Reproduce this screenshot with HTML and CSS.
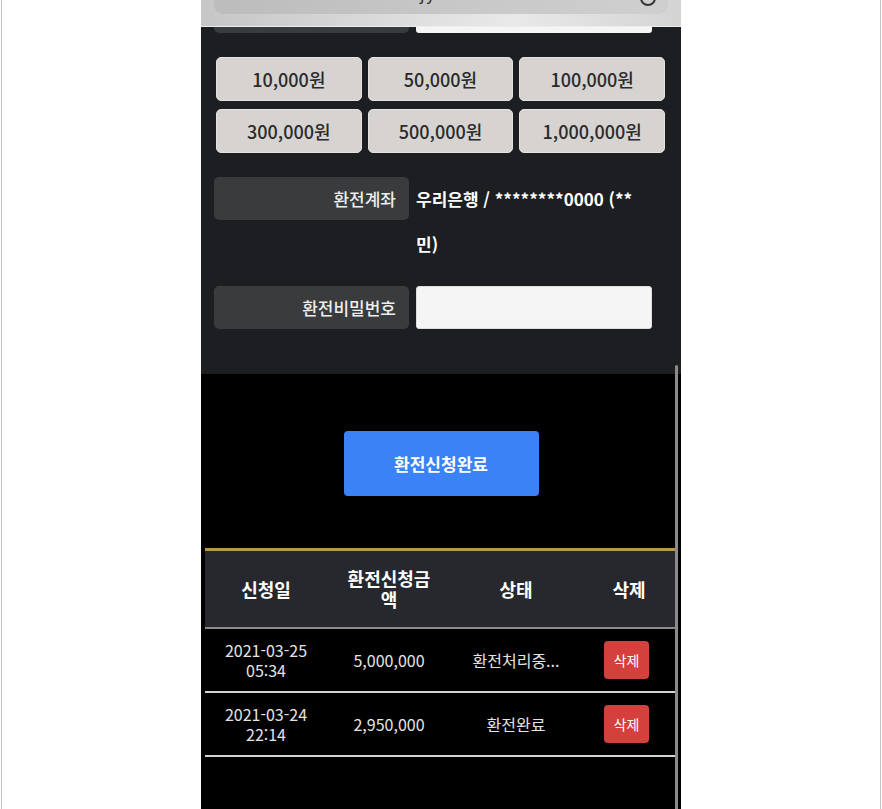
FILE: index.html
```html
<!DOCTYPE html>
<html lang="ko">
<head>
  <meta charset="UTF-8">
  <meta name="viewport" content="width=device-width, initial-scale=1.0">
  <title>환전신청</title>
<link rel="stylesheet" href="styles.css">
</head>
<body>
  <div class="frame">
    <div class="phone">
      <div class="browser-bar">
        <div class="url-pill">
          <div class="url-text"><span class="blk"></span><span class="blk"></span><span class="blk"></span> .jy.com</div>
          <span class="reload"></span>
        </div>
      </div>

      <section class="form-area">
        <div class="prev-row">
          <span class="stub-label"></span>
          <span class="stub-input"></span>
        </div>

        <div class="amounts">
          <button type="button" class="amount">10,000원</button>
          <button type="button" class="amount">50,000원</button>
          <button type="button" class="amount">100,000원</button>
          <button type="button" class="amount">300,000원</button>
          <button type="button" class="amount">500,000원</button>
          <button type="button" class="amount">1,000,000원</button>
        </div>

        <div class="row">
          <div class="label">환전계좌</div>
          <div class="value">우리은행 / ********0000 (**<br>민)</div>
        </div>

        <div class="row row-pw">
          <div class="label">환전비밀번호</div>
          <input type="password" class="pw">
        </div>
      </section>

      <section class="bottom">
        <div class="submit-wrap">
          <button type="button" class="submit">환전신청완료</button>
        </div>

        <table class="history">
          <colgroup>
            <col style="width:122px">
            <col style="width:124px">
            <col style="width:130px">
            <col style="width:96px">
          </colgroup>
          <thead>
            <tr>
              <th>신청일</th>
              <th>환전신청금액</th>
              <th>상태</th>
              <th>삭제</th>
            </tr>
          </thead>
          <tbody>
            <tr>
              <td>2021-03-25<br>05:34</td>
              <td>5,000,000</td>
              <td>환전처리중...</td>
              <td class="del-cell"><button type="button" class="del">삭제</button></td>
            </tr>
            <tr>
              <td>2021-03-24<br>22:14</td>
              <td>2,950,000</td>
              <td>환전완료</td>
              <td class="del-cell"><button type="button" class="del">삭제</button></td>
            </tr>
          </tbody>
        </table>

        <div class="scrollbar"></div>
      </section>
    </div>
  </div>
</body>
</html>
```

FILE: styles.css
```css
body {
  margin: 0;
  padding: 0;
  background-color: #fff;
  font-family: "Noto Sans CJK KR", "Noto Sans", sans-serif;
}

.frame {
  margin: 0 1px;
  border-left: 1px solid #c4c4c4;
  border-right: 1px solid #c4c4c4;
  min-height: 809px;
}

.phone {
  position: relative;
  width: 480px;
  margin: 0 auto;
  min-height: 809px;
  display: flex;
  flex-direction: column;
  background-color: #000;
}

/* browser chrome at the top */
.browser-bar {
  height: 26px;
  padding: 0 13px;
  background: linear-gradient(to right, #c6c6c6, #e9e9e9 65%, #d4d4d4);
  border-bottom: 1px solid #ededed;
}

.url-pill {
  height: 14px;
  overflow: hidden;
  display: flex;
  justify-content: space-between;
  border-radius: 0 0 9px 9px;
  background: linear-gradient(to right, #bcbcbc, #c9c9c9 60%, #cfcfcf);
}

.url-text {
  margin-top: -15px;
  padding-left: 130px;
  font-size: 16px;
  line-height: 16px;
  color: #2a2a2a;
  letter-spacing: 2px;
}

.blk {
  display: inline-block;
  width: 13px;
  height: 15px;
  margin-right: 8px;
  background-color: #666;
}

.reload {
  width: 12px;
  height: 12px;
  margin-top: -10px;
  margin-right: 12px;
  border: 2px solid #333;
  border-radius: 50%;
}

/* form section */
.form-area {
  background-color: #1c1e22;
  padding-bottom: 45px;
}

.prev-row {
  display: flex;
  gap: 7px;
  padding-left: 13px;
  height: 6px;
}

.stub-label {
  width: 195px;
  background-color: #3a3b3d;
  border-radius: 0 0 5px 5px;
}

.stub-input {
  width: 236px;
  background-color: #f5f5f5;
  border-radius: 0 0 3px 3px;
}

.amounts {
  display: grid;
  grid-template-columns: repeat(3, 1fr);
  column-gap: 6px;
  row-gap: 8px;
  margin-top: 24px;
  padding: 0 16px 0 15px;
}

.amount {
  height: 44px;
  border: 1px solid #e4e2e0;
  border-radius: 5px;
  background-color: #d6d3d1;
  color: #2a2a2a;
  font-family: inherit;
  font-size: 18px;
  font-weight: 500;
  cursor: pointer;
}

.row {
  display: flex;
  gap: 7px;
  padding-left: 13px;
  margin-top: 24px;
}

.row-pw {
  margin-top: 20px;
}

.label {
  width: 195px;
  height: 43px;
  box-sizing: border-box;
  padding-right: 13px;
  border-radius: 5px;
  background-color: #3a3b3d;
  color: #eee;
  font-size: 17px;
  font-weight: 500;
  line-height: 43px;
  text-align: right;
}

.value {
  width: 236px;
  color: #fff;
  font-size: 17px;
  font-weight: bold;
  line-height: 45px;
  margin-top: -1px;
}

.pw {
  width: 236px;
  height: 43px;
  box-sizing: border-box;
  border: 1px solid #ddd;
  border-radius: 3px;
  background-color: #f5f5f5;
}

/* bottom section */
.bottom {
  flex: 1;
  background-color: #000;
  padding-top: 57px;
}

.submit-wrap {
  display: flex;
  justify-content: center;
}

.submit {
  width: 195px;
  height: 65px;
  border: none;
  border-radius: 4px;
  background-color: #3b82f6;
  color: #fff;
  font-family: inherit;
  font-size: 17px;
  font-weight: bold;
  cursor: pointer;
}

.history {
  width: 472px;
  margin: 52px 0 0 4px;
  table-layout: fixed;
  border-collapse: separate;
  border-spacing: 0;
}

.history th {
  padding: 17px 16px;
  line-height: 21px;
  font-size: 18px;
  font-weight: bold;
  color: #fff;
  background-color: #27282d;
  border-top: 3px solid #b8994a;
  border-bottom: 2px solid #8c8c8c;
  text-align: center;
  word-break: break-all;
}

.history td {
  padding: 11px 4px;
  line-height: 20px;
  font-size: 16px;
  color: #e4e4e4;
  text-align: center;
  border-bottom: 2px solid #d4d4d4;
}

.history td.del-cell {
  padding-right: 9px;
}

.del {
  width: 45px;
  height: 38px;
  border: none;
  border-radius: 4px;
  background-color: #d4403b;
  color: #fff;
  font-family: inherit;
  font-size: 14px;
  cursor: pointer;
}

.scrollbar {
  position: absolute;
  top: 365px;
  right: 3px;
  bottom: 0;
  width: 3px;
  border-radius: 2px 2px 0 0;
  background-color: #8a8a8a;
}
```
